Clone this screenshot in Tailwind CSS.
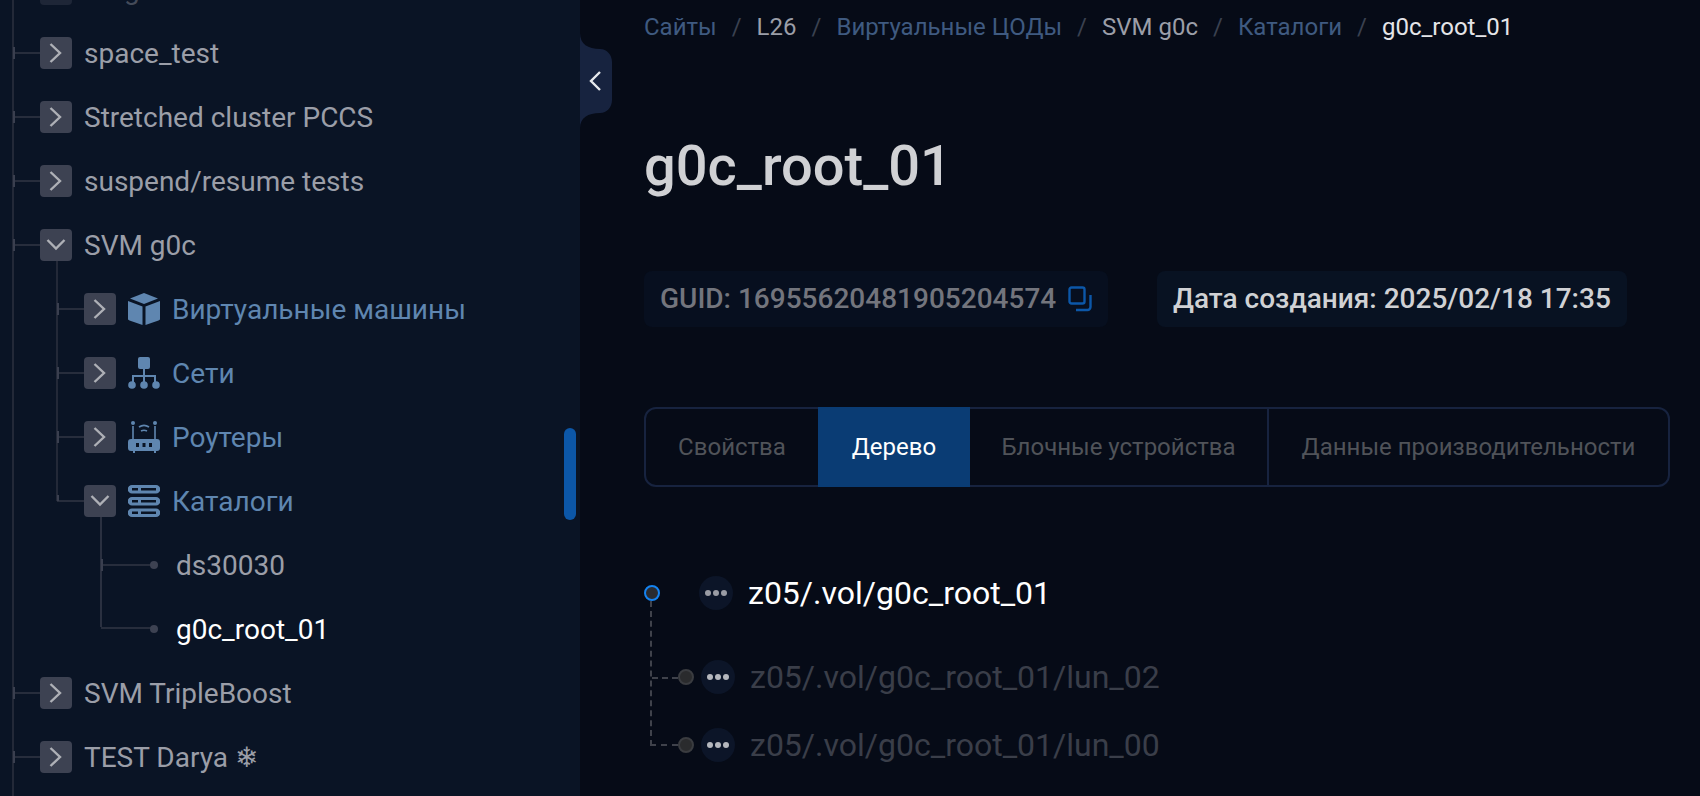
<!DOCTYPE html>
<html lang="ru"><head><meta charset="utf-8"><script src="https://cdn.jsdelivr.net/npm/@tailwindcss/browser@4"></script></head>
<body class="m-0 bg-[#060b17]">
<div class="relative flex h-[796px] w-[1700px] overflow-hidden bg-[#060b17] font-['Roboto',sans-serif]">
<!-- sidebar -->
<aside class="relative h-full w-[580px] shrink-0 overflow-hidden bg-[#0a1425] text-[28px] text-[#9b9ea8]">
  <div class="absolute left-[12px] top-0 h-full w-[2px] bg-[#232938]"></div>
  <div class="absolute left-[56px] top-[261px] h-[240px] w-[2px] bg-[#232938]"></div>
  <div class="absolute left-[100px] top-[517px] h-[110px] w-[2px] bg-[#2a3040]"></div>
  <div class="absolute left-[564px] top-[428px] h-[92px] w-[12px] rounded-full bg-[#0c57a8]"></div>
  <div class="-mt-[43px]">
    <div class="relative flex h-16 items-center pl-[40px] opacity-40"><span class="flex h-8 w-8 items-center justify-center rounded bg-[#3d4252]"></span><span class="ml-3 pt-[2px] leading-8">Ping</span></div>
    <div class="relative flex h-16 items-center pl-[40px]"><span class="absolute left-[13px] h-[2px] w-[27px] bg-[#272d3c]"></span><span class="absolute left-[13px] h-[12px] w-[2px] bg-[#3a3f4f]"></span><span class="flex h-8 w-8 items-center justify-center rounded bg-[#3d4252]"><svg width="16" height="20" viewBox="0 0 16 20" fill="none" stroke="#aeb0b6" stroke-width="2.400"><path d="M2.500 1l9.500 9-9.500 9"/></svg></span><span class="ml-3 pt-[2px] leading-8">space_test</span></div>
    <div class="relative flex h-16 items-center pl-[40px]"><span class="absolute left-[13px] h-[2px] w-[27px] bg-[#272d3c]"></span><span class="absolute left-[13px] h-[12px] w-[2px] bg-[#3a3f4f]"></span><span class="flex h-8 w-8 items-center justify-center rounded bg-[#3d4252]"><svg width="16" height="20" viewBox="0 0 16 20" fill="none" stroke="#aeb0b6" stroke-width="2.400"><path d="M2.500 1l9.500 9-9.500 9"/></svg></span><span class="ml-3 pt-[2px] leading-8">Stretched cluster PCCS</span></div>
    <div class="relative flex h-16 items-center pl-[40px]"><span class="absolute left-[13px] h-[2px] w-[27px] bg-[#272d3c]"></span><span class="absolute left-[13px] h-[12px] w-[2px] bg-[#3a3f4f]"></span><span class="flex h-8 w-8 items-center justify-center rounded bg-[#3d4252]"><svg width="16" height="20" viewBox="0 0 16 20" fill="none" stroke="#aeb0b6" stroke-width="2.400"><path d="M2.500 1l9.500 9-9.500 9"/></svg></span><span class="ml-3 pt-[2px] leading-8">suspend/resume tests</span></div>
    <div class="relative flex h-16 items-center pl-[40px]"><span class="absolute left-[13px] h-[2px] w-[27px] bg-[#272d3c]"></span><span class="absolute left-[13px] h-[12px] w-[2px] bg-[#3a3f4f]"></span><span class="flex h-8 w-8 items-center justify-center rounded bg-[#3d4252]"><svg width="20" height="16" viewBox="0 0 20 16" fill="none" stroke="#aeb0b6" stroke-width="2.400"><path d="M1.500 3l8.500 8.500 8.500-8.500"/></svg></span><span class="ml-3 pt-[2px] leading-8">SVM g0c</span></div>

    <div class="relative flex h-16 items-center pl-[84px]"><span class="absolute left-[57px] h-[2px] w-[27px] bg-[#272d3c]"></span><span class="absolute left-[57px] h-[12px] w-[2px] bg-[#3a3f4f]"></span><span class="flex h-8 w-8 items-center justify-center rounded bg-[#3d4252]"><svg width="16" height="20" viewBox="0 0 16 20" fill="none" stroke="#aeb0b6" stroke-width="2.400"><path d="M2.500 1l9.500 9-9.500 9"/></svg></span>
      <svg class="ml-3" width="32" height="32" viewBox="0 0 32 32" fill="#5f86b0"><path d="M16 0l14 5.500-14 5.500-14-5.500z"/><path d="M0 8l14.500 5.500v18.500l-13-4.500-1.500-1z"/><path d="M32 8l-14.500 5.500v18.500l13-4.500 1.500-1z"/></svg>
      <span class="ml-3 pt-[2px] leading-8 text-[#5f86b0]">Виртуальные машины</span></div>
    <div class="relative flex h-16 items-center pl-[84px]"><span class="absolute left-[57px] h-[2px] w-[27px] bg-[#272d3c]"></span><span class="absolute left-[57px] h-[12px] w-[2px] bg-[#3a3f4f]"></span><span class="flex h-8 w-8 items-center justify-center rounded bg-[#3d4252]"><svg width="16" height="20" viewBox="0 0 16 20" fill="none" stroke="#aeb0b6" stroke-width="2.400"><path d="M2.500 1l9.500 9-9.500 9"/></svg></span>
      <svg class="ml-3" width="32" height="32" viewBox="0 0 32 32" fill="#5f86b0"><rect x="10" y="0" width="12" height="12" rx="2"/><path d="M15 12h2v6h11v7h-2v-5H17v5h-2v-5H6v5H4v-7h11z"/><circle cx="4" cy="28" r="3.800"/><circle cx="16" cy="28" r="3.800"/><circle cx="28" cy="28" r="3.800"/></svg>
      <span class="ml-3 pt-[2px] leading-8 text-[#5f86b0]">Сети</span></div>
    <div class="relative flex h-16 items-center pl-[84px]"><span class="absolute left-[57px] h-[2px] w-[27px] bg-[#272d3c]"></span><span class="absolute left-[57px] h-[12px] w-[2px] bg-[#3a3f4f]"></span><span class="flex h-8 w-8 items-center justify-center rounded bg-[#3d4252]"><svg width="16" height="20" viewBox="0 0 16 20" fill="none" stroke="#aeb0b6" stroke-width="2.400"><path d="M2.500 1l9.500 9-9.500 9"/></svg></span>
      <svg class="ml-3" width="32" height="32" viewBox="0 0 32 32"><circle cx="5" cy="2" r="2" fill="#5f86b0"/><circle cx="27" cy="2" r="2" fill="#5f86b0"/><path d="M5 5v13M27 5v13M11 6c3-2 7-2 10 0M13 10c2-1 4-1 6 0" fill="none" stroke="#5f86b0" stroke-width="1.600"/><path fill-rule="evenodd" fill="#5f86b0" d="M3 18h26a3 3 0 013 3v6a3 3 0 01-3 3h-1v2h-2v-2H7v2H5v-2H3a3 3 0 01-3-3v-6a3 3 0 013-3zM8 22v4h3v-4zM14.500 22v4h3v-4zM21 22v4h3v-4z"/></svg>
      <span class="ml-3 pt-[2px] leading-8 text-[#5f86b0]">Роутеры</span></div>
    <div class="relative flex h-16 items-center pl-[84px]"><span class="absolute left-[57px] h-[2px] w-[27px] bg-[#272d3c]"></span><span class="absolute left-[57px] top-[26px] h-[6px] w-[2px] bg-[#3a3f4f]"></span><span class="flex h-8 w-8 items-center justify-center rounded bg-[#3d4252]"><svg width="20" height="16" viewBox="0 0 20 16" fill="none" stroke="#aeb0b6" stroke-width="2.400"><path d="M1.500 3l8.500 8.500 8.500-8.500"/></svg></span>
      <svg class="ml-3" width="32" height="32" viewBox="0 0 32 32" fill="#5f86b0"><path fill-rule="evenodd" d="M4 0h24a4 4 0 010 8.500H4A4 4 0 014 0zM4 3v2.500h6V3zM13 3v2.500h15V3z"/><path fill-rule="evenodd" d="M4 12h24a4 4 0 010 8.500H4a4 4 0 010-8.500zM4 15v2.500h6V15zM13 15v2.500h15V15z"/><path fill-rule="evenodd" d="M4 23.500h24a4 4 0 010 8.500H4a4 4 0 010-8.500zM4 26.500V29h6v-2.500zM13 26.500V29h15v-2.500z"/></svg>
      <span class="ml-3 pt-[2px] leading-8 text-[#5f86b0]">Каталоги</span></div>

    <div class="relative flex h-16 items-center pl-[176px]"><span class="absolute left-[101px] h-[2px] w-[50px] bg-[#272d3c]"></span><span class="absolute left-[101px] h-[12px] w-[2px] bg-[#3a3f4f]"></span><span class="absolute left-[150px] h-2 w-2 rounded-full bg-[#3d4252]"></span><span class="pt-[2px] leading-8">ds30030</span></div>
    <div class="relative flex h-16 items-center pl-[176px]"><span class="absolute left-[101px] top-[30px] h-[2px] w-[50px] bg-[#272d3c]"></span><span class="absolute left-[150px] h-2 w-2 rounded-full bg-[#3d4252]"></span><span class="pt-[2px] leading-8 text-white">g0c_root_01</span></div>

    <div class="relative flex h-16 items-center pl-[40px]"><span class="absolute left-[13px] h-[2px] w-[27px] bg-[#272d3c]"></span><span class="absolute left-[13px] h-[12px] w-[2px] bg-[#3a3f4f]"></span><span class="flex h-8 w-8 items-center justify-center rounded bg-[#3d4252]"><svg width="16" height="20" viewBox="0 0 16 20" fill="none" stroke="#aeb0b6" stroke-width="2.400"><path d="M2.500 1l9.500 9-9.500 9"/></svg></span><span class="ml-3 pt-[2px] leading-8">SVM TripleBoost</span></div>
    <div class="relative flex h-16 items-center pl-[40px]"><span class="absolute left-[13px] h-[2px] w-[27px] bg-[#272d3c]"></span><span class="absolute left-[13px] h-[12px] w-[2px] bg-[#3a3f4f]"></span><span class="flex h-8 w-8 items-center justify-center rounded bg-[#3d4252]"><svg width="16" height="20" viewBox="0 0 16 20" fill="none" stroke="#aeb0b6" stroke-width="2.400"><path d="M2.500 1l9.500 9-9.500 9"/></svg></span><span class="ml-3 pt-[2px] leading-8">TEST Darya <span class="font-['DejaVu_Sans']">❄</span></span></div>
  </div>
</aside>
<!-- collapse tab -->
<svg class="absolute left-[580px] top-0" width="34" height="140" viewBox="0 0 34 140" fill="none"><path d="M0 33C0 44 8 49 20 49C27 49 32 55 32 62V100C32 107 27 113 20 113C8 113 0 118 0 128Z" fill="#17233f"/><path d="M20 72L11 81L20 90" stroke="#e6e8ec" stroke-width="2.400"/></svg>
<!-- main -->
<main class="flex-1 pl-[64px] pr-[30px]">
  <nav class="flex h-[54px] items-center text-[24px] leading-none text-[#3f5a80]">
    <span>Сайты</span><span class="mx-[15px] text-[#3a4150]">/</span><span class="text-[#9b9ea8]">L26</span><span class="mx-[15px] text-[#3a4150]">/</span><span>Виртуальные ЦОДы</span><span class="mx-[15px] text-[#3a4150]">/</span><span class="text-[#9b9ea8]">SVM g0c</span><span class="mx-[15px] text-[#3a4150]">/</span><span>Каталоги</span><span class="mx-[15px] text-[#3a4150]">/</span><span class="text-[#e4e5e8]">g0c_root_01</span>
  </nav>
  <h1 class="mt-[80px] text-[56px] font-medium leading-[64px] text-[#d0d1d4]">g0c_root_01</h1>
  <div class="mt-[73px] flex gap-[49px] text-[28px] font-medium">
    <div class="flex h-14 w-[464px] items-center gap-3 rounded-lg bg-[#070f1f] pl-4 text-[#73757d]"><span>GUID: 1695562048190520457<!-- -->4</span><svg width="24" height="26" viewBox="0 0 24 26" fill="none" stroke="#0c57a8" stroke-width="2.400"><rect x="1.500" y="1.500" width="15" height="16" rx="2"/><path d="M22.500 9v12a3 3 0 01-3 3H8"/></svg></div>
    <div class="flex h-14 items-center rounded-lg bg-[#081222] px-4 text-[#d0d1d4]">Дата создания: 2025/02/18 17:35</div>
  </div>
  <div class="mt-[80px] flex h-[80px] w-[1026px] rounded-xl border-2 border-[#17233f] text-[24px] text-[#505359]">
    <div class="flex w-[172px] items-center justify-center">Свойства</div>
    <div class="-my-[2px] flex w-[152px] items-center justify-center bg-[#0a3c74] text-white">Дерево</div>
    <div class="flex w-[299px] items-center justify-center border-r-2 border-[#17233f]">Блочные устройства</div>
    <div class="flex flex-1 items-center justify-center">Данные производительности</div>
  </div>
  <div class="relative mt-[77px] text-[32px] leading-none">
    <div class="relative flex h-[58px] items-center">
      <span class="h-4 w-4 rounded-full border-2 border-[#1583f0] bg-[#2a2c31]"></span>
      <span class="ml-[39px] flex h-[34px] w-[34px] items-center justify-center gap-[2px] rounded-full bg-[#0c1528]"><i class="h-[6px] w-[6px] rounded-full bg-[#9a9ca4]"></i><i class="h-[6px] w-[6px] rounded-full bg-[#9a9ca4]"></i><i class="h-[6px] w-[6px] rounded-full bg-[#9a9ca4]"></i></span>
      <span class="ml-[15px] text-white">z05/.vol/g0c_root_01</span>
    </div>
    <div class="absolute left-[6px] top-[37px] h-[145px] w-[28px] border-b-2 border-l-2 border-dashed border-[#3f424b]"></div>
    <div class="absolute left-[8px] top-[113px] w-[26px] border-t-2 border-dashed border-[#3f424b]"></div>
    <div class="mt-[21px] flex h-[68px] items-center pl-[34px]">
      <span class="relative h-4 w-4 rounded-full border-2 border-[#3a3c40] bg-[#2a2b2d]"></span>
      <span class="ml-[7px] flex h-[34px] w-[34px] items-center justify-center gap-[2px] rounded-full bg-[#0c1528]"><i class="h-[6px] w-[6px] rounded-full bg-[#b5b7bd]"></i><i class="h-[6px] w-[6px] rounded-full bg-[#b5b7bd]"></i><i class="h-[6px] w-[6px] rounded-full bg-[#b5b7bd]"></i></span>
      <span class="ml-[15px] text-[#3a3e49]">z05/.vol/g0c_root_01/lun_02</span>
    </div>
    <div class="flex h-[68px] items-center pl-[34px]">
      <span class="relative h-4 w-4 rounded-full border-2 border-[#3a3c40] bg-[#2a2b2d]"></span>
      <span class="ml-[7px] flex h-[34px] w-[34px] items-center justify-center gap-[2px] rounded-full bg-[#0c1528]"><i class="h-[6px] w-[6px] rounded-full bg-[#b5b7bd]"></i><i class="h-[6px] w-[6px] rounded-full bg-[#b5b7bd]"></i><i class="h-[6px] w-[6px] rounded-full bg-[#b5b7bd]"></i></span>
      <span class="ml-[15px] text-[#3a3e49]">z05/.vol/g0c_root_01/lun_00</span>
    </div>
  </div>
</main>
</div>
</body></html>
